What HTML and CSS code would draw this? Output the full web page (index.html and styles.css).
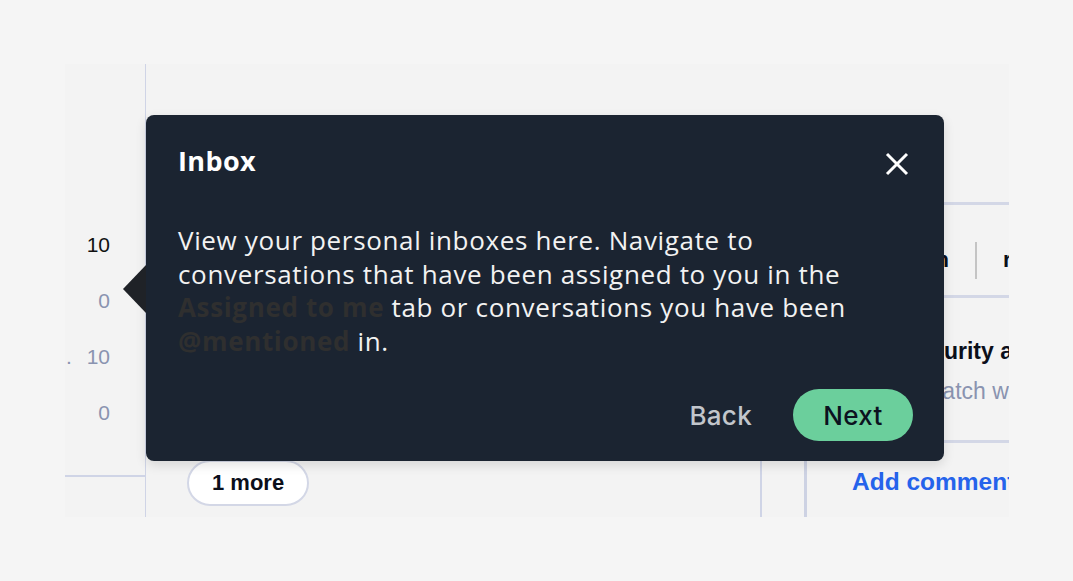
FILE: index.html
```html
<!DOCTYPE html>
<html lang="en">
<head>
    <meta charset="UTF-8">
    <title>Inbox tour</title>
    <link rel="stylesheet" href="styles.css">
</head>
<body>
    <div class="frame">
        <!-- chart axis -->
        <div class="axis">
            <span class="tick tick-dark">10</span>
            <span class="tick">0</span>
            <span class="tick"><i class="dot">.</i>10</span>
            <span class="tick">0</span>
            <div class="axis-rule"></div>
        </div>

        <div class="main">
            <button class="pill">1 more</button>
        </div>

        <div class="gutter"></div>

        <div class="side">
            <div class="side-rule"></div>
            <div class="tabs">
                <span class="tab tab-first">Conversation</span>
                <span class="tab-divider"></span>
                <span class="tab">rules</span>
            </div>
            <div class="side-rule"></div>
            <div class="rule-card">
                <p class="rule-title">Web security alert</p>
                <p class="rule-desc">Rules match when</p>
            </div>
            <div class="side-rule"></div>
            <a class="add-comment">Add comment</a>
        </div>

        <!-- onboarding tooltip -->
        <div class="tour">
            <span class="tour-arrow"></span>
            <div class="tour-head">
                <h2>Inbox</h2>
                <button class="tour-close" aria-label="Close">
                    <svg width="24" height="24" viewBox="0 0 24 24">
                        <path d="M2 2 L22 22 M22 2 L2 22" stroke="#fff" stroke-width="3" fill="none"/>
                    </svg>
                </button>
            </div>
            <p class="tour-text">View your personal inboxes here. Navigate to conversations that have been assigned to you in the <strong>Assigned to me</strong> tab or conversations you have been <strong>@mentioned</strong> in.</p>
            <div class="tour-actions">
                <button class="btn-back">Back</button>
                <button class="btn-next">Next</button>
            </div>
        </div>
    </div>
</body>
</html>
```

FILE: styles.css
```css
body {
    margin: 0;
    padding: 64px 65px;
    background-color: #f5f5f5;
    font-family: 'Liberation Sans', Arial, sans-serif;
}

.frame {
    position: relative;
    width: 944px;
    height: 453px;
    background-color: #f3f3f3;
    display: grid;
    grid-template-columns: 81px 614px 44px 205px;
    overflow: hidden;
}

.axis {
    border-right: 1px solid #cfd4e6;
    display: flex;
    flex-direction: column;
    padding-top: 153px;
}

.tick {
    position: relative;
    height: 56px;
    line-height: 56px;
    text-align: right;
    padding-right: 35px;
    font-size: 21px;
    color: #8a93b0;
}

.tick-dark {
    color: #111;
}

.dot {
    position: absolute;
    left: 1px;
    font-style: normal;
}

.axis-rule {
    margin-top: 34px;
    border-top: 2px solid #cfd4e6;
}

.main {
    padding: 396px 0 0 41px;
}

.pill {
    height: 46px;
    padding: 0 23px;
    background-color: white;
    border: 2px solid #d3d7e6;
    border-radius: 23px;
    font-family: 'Liberation Sans', Arial, sans-serif;
    font-weight: bold;
    font-size: 22px;
    color: #0b0f1a;
}

.gutter {
    margin-top: 100px;
    border-left: 2px solid #cfd4e6;
}

.side {
    margin-top: 100px;
    border-left: 3px solid #cdd2e3;
    padding-top: 38px;
    padding-left: 21px;
}

.side-rule {
    border-top: 3px solid #d3d7e6;
    width: 300px;
}

.tabs {
    height: 90px;
    padding-top: 20px;
    box-sizing: border-box;
    display: flex;
    align-items: center;
    white-space: nowrap;
    font-weight: bold;
    font-size: 22px;
    color: #0b0f1a;
}

.tab {
    flex-shrink: 0;
}

.tab-first {
    width: 121px;
    direction: rtl;
    text-align: right;
}

.tab-divider {
    flex-shrink: 0;
    width: 2px;
    height: 37px;
    margin: 0 26px;
    background-color: #c4c4c4;
}

.rule-card {
    height: 142px;
    padding-left: 23px;
    padding-top: 33px;
    box-sizing: border-box;
    white-space: nowrap;
}

.rule-card p {
    margin: 0;
    font-size: 23px;
    line-height: 40px;
}

.rule-title {
    font-weight: bold;
    color: #0b0f1a;
}

.rule-desc {
    padding-left: 7px;
    color: #8a93b0;
}

.add-comment {
    display: block;
    margin: 25px 0 0 24px;
    white-space: nowrap;
    font-weight: bold;
    font-size: 24.5px;
    color: #2563eb;
}

.tour {
    position: absolute;
    left: 81px;
    top: 51px;
    width: 798px;
    height: 346px;
    box-sizing: border-box;
    padding: 28px 31px 20px 32px;
    background-color: #1b2431;
    border-radius: 8px;
    box-shadow: 0 4px 12px rgba(0, 0, 0, 0.12);
    display: flex;
    flex-direction: column;
    font-family: 'Open Sans', sans-serif;
}

.tour-arrow {
    position: absolute;
    left: -23px;
    top: 150px;
    border-top: 24px solid transparent;
    border-bottom: 24px solid transparent;
    border-right: 23px solid #1f2227;
}

.tour-head {
    display: flex;
    justify-content: space-between;
    align-items: center;
}

.tour-head h2 {
    margin: 0;
    font-size: 27px;
    line-height: 36px;
    font-weight: bold;
    letter-spacing: 0.4px;
    color: white;
}

.tour-close {
    width: 24px;
    height: 24px;
    padding: 0;
    margin: 6px 4px 0 0;
    background: none;
    border: none;
}

.tour-text {
    margin: 45px 0 0 0;
    max-width: 690px;
    font-size: 26px;
    line-height: 33.5px;
    letter-spacing: 0.65px;
    color: #f2f2f2;
}

.tour-text strong {
    color: #2f2f2f;
}

.tour-actions {
    margin-top: auto;
    display: flex;
    justify-content: flex-end;
    align-items: center;
    gap: 21px;
}

.tour-actions button {
    height: 52px;
    border: none;
    font-family: 'Inter', sans-serif;
    font-weight: 500;
    font-size: 26px;
    letter-spacing: 0.3px;
}

.btn-back {
    padding: 0 20px;
    background: none;
    color: #c2c6cc;
}

.btn-next {
    width: 120px;
    background-color: #6bcf9c;
    border-radius: 26px;
    color: #0b1220;
}
```
